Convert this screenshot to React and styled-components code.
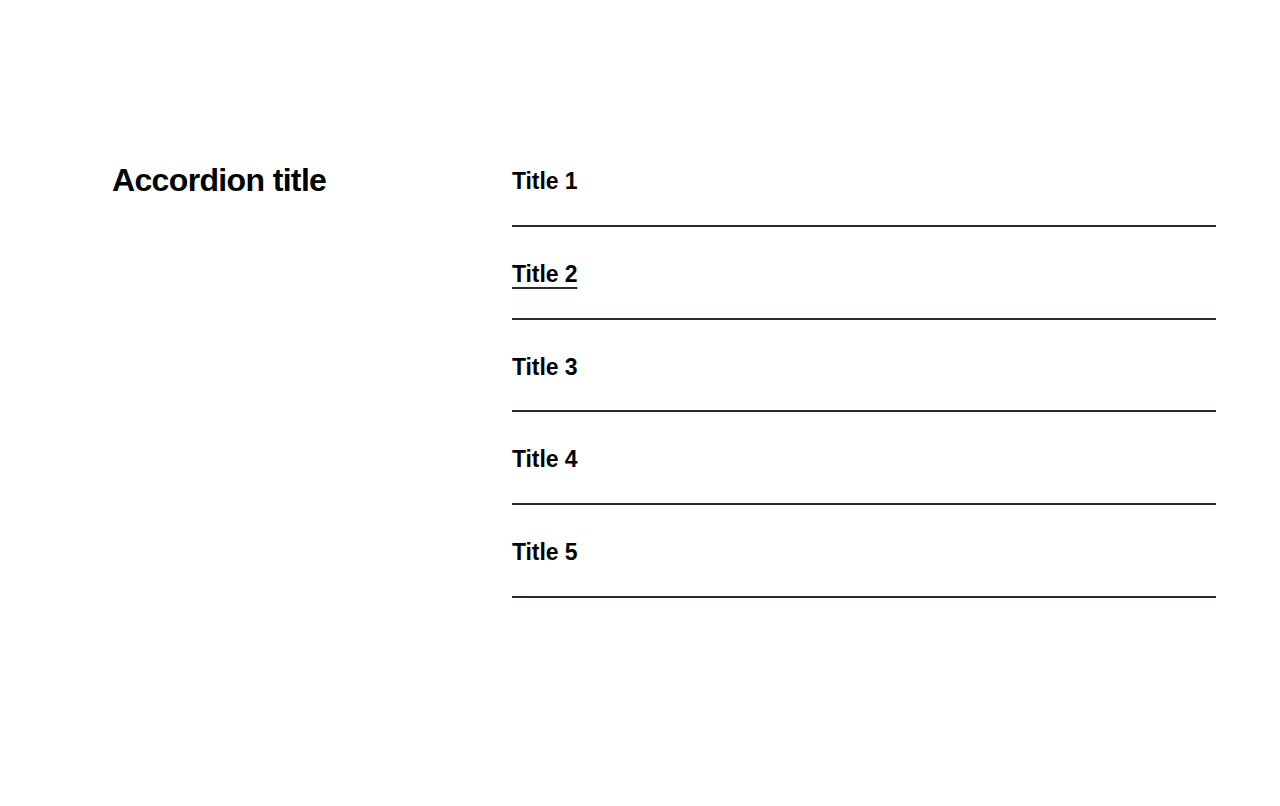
import React, { useState } from "react";
import styled, { createGlobalStyle } from "styled-components";

const GlobalStyle = createGlobalStyle`
  body {
    margin: 0;
    background: #ffffff;
    font-family: "Liberation Sans", Arial, sans-serif;
    color: #000000;
  }
`;

const Section = styled.section`
  display: grid;
  grid-template-columns: 400px 1fr;
  padding: 134px 64px 0 112px;
`;

const Heading = styled.h2`
  margin: 0;
  padding-top: 28px;
  font-size: 32px;
  line-height: 36px;
  font-weight: 700;
  letter-spacing: -0.65px;
`;

const List = styled.div`
  display: flex;
  flex-direction: column;
`;

const Item = styled.div`
  border-bottom: 2px solid #1f2d3a;
`;

const Trigger = styled.button`
  display: block;
  width: 100%;
  padding: 33px 0 28.75px;
  border: 0;
  background: transparent;
  text-align: left;
  cursor: pointer;
  font-family: inherit;
  font-size: 23px;
  line-height: 29px;
  font-weight: 700;
  letter-spacing: -0.1px;
  color: #000000;

  span {
    text-decoration: ${({ $hover }) => ($hover ? "underline" : "none")};
    text-decoration-color: #1f2d3a;
    text-decoration-thickness: 2px;
    text-underline-offset: 5px;
  }
`;

const titles = ["Title 1", "Title 2", "Title 3", "Title 4", "Title 5"];

export default function App() {
  const [hovered, setHovered] = useState(1);
  return (
    <>
      <GlobalStyle />
      <Section>
        <Heading>Accordion title</Heading>
        <List>
          {titles.map((t, i) => (
            <Item key={t}>
              <Trigger
                $hover={hovered === i}
                onMouseEnter={() => setHovered(i)}
              >
                <span>{t}</span>
              </Trigger>
            </Item>
          ))}
        </List>
      </Section>
    </>
  );
}
